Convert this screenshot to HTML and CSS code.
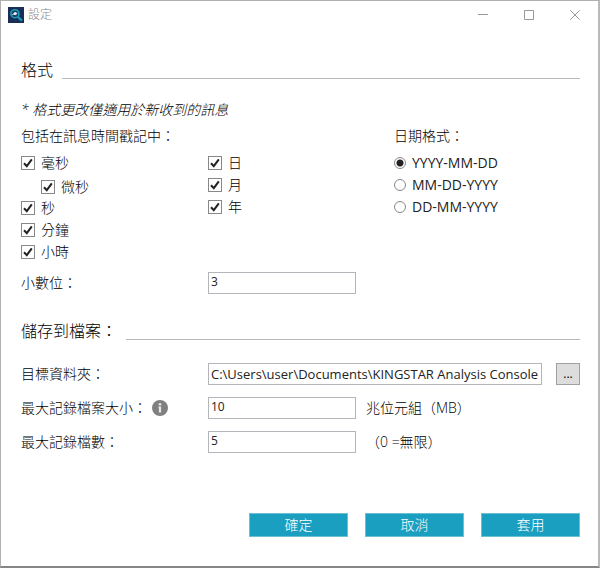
FILE: index.html
```html
<!DOCTYPE html>
<html lang="zh-Hant">
<head>
<meta charset="utf-8">
<meta name="viewport" content="width=device-width, initial-scale=1">
<title>設定</title>
<link rel="stylesheet" href="styles.css">
</head>
<body>
<div class="window">
  <header class="titlebar">
    <svg class="app-icon" viewBox="0 0 16 16" aria-hidden="true">
      <rect width="16" height="16" fill="#182f58"/>
      <circle cx="6.9" cy="6.7" r="4" fill="#173a5e" stroke="#1c9dbd" stroke-width="1.6"/>
      <path d="M9.8 9.8L13.8 13.6" stroke="#1c9dbd" stroke-width="2.2"/>
      <path d="M4.2 8L6 6.8L7 7.6L9.2 6" fill="none" stroke="#a9cbd8" stroke-width="1.1"/>
      <circle cx="7.2" cy="6.6" r="1.5" fill="#e4eef2"/>
    </svg>
    <h1 class="title">設定</h1>
    <div class="window-controls">
      <button type="button" class="window-button" aria-label="最小化"><svg viewBox="0 0 10 10"><path d="M0 4.5H10"/></svg></button>
      <button type="button" class="window-button" aria-label="最大化"><svg viewBox="0 0 10 10"><path d="M.5 .5H9.5V9.5H.5Z"/></svg></button>
      <button type="button" class="window-button" aria-label="關閉"><svg viewBox="0 0 10 10"><path d="M.3 .3L9.7 9.7M9.7 .3L.3 9.7"/></svg></button>
    </div>
  </header>

  <form class="content">
    <h2 class="section-title">格式</h2>
    <p class="note">* 格式更改僅適用於新收到的訊息</p>

    <div class="format-grid">
      <p class="group-label group-wide" id="stamp-label">包括在訊息時間戳記中：</p>
      <p class="group-label" id="date-label">日期格式：</p>
      <div class="options" role="group" aria-labelledby="stamp-label">
        <label class="option"><input type="checkbox" checked>毫秒</label>
        <label class="option option-nested"><input type="checkbox" checked>微秒</label>
        <label class="option"><input type="checkbox" checked>秒</label>
        <label class="option"><input type="checkbox" checked>分鐘</label>
        <label class="option"><input type="checkbox" checked>小時</label>
      </div>
      <div class="options" role="group" aria-labelledby="stamp-label">
        <label class="option"><input type="checkbox" checked>日</label>
        <label class="option"><input type="checkbox" checked>月</label>
        <label class="option"><input type="checkbox" checked>年</label>
      </div>
      <div class="options options-date" role="radiogroup" aria-labelledby="date-label">
        <label class="option"><input type="radio" name="date" checked>YYYY-MM-DD</label>
        <label class="option"><input type="radio" name="date">MM-DD-YYYY</label>
        <label class="option"><input type="radio" name="date">DD-MM-YYYY</label>
      </div>
    </div>

    <div class="field">
      <label class="field-label" for="decimals">小數位：</label>
      <input class="text-box" id="decimals" type="text" value="3">
    </div>

    <h2 class="section-title section-file">儲存到檔案：</h2>

    <div class="fields">
      <div class="field">
        <label class="field-label" for="folder">目標資料夾：</label>
        <input class="text-box text-box-path" id="folder" type="text" value="C:\Users\user\Documents\KINGSTAR Analysis Console">
        <button type="button" class="browse">...</button>
      </div>
      <div class="field">
        <label class="field-label" for="size">最大記錄檔案大小：
          <svg class="info" viewBox="0 0 16 16" aria-hidden="true">
            <circle cx="8" cy="8" r="8" fill="#808080"/>
            <circle cx="8" cy="4.2" r="1.3" fill="#e8e8e8"/>
            <path d="M6.3 6.5H9.1V12.4H6.9V7.5H6.3Z" fill="#e8e8e8"/>
          </svg>
        </label>
        <input class="text-box" id="size" type="text" value="10">
        <span class="unit">兆位元組（MB）</span>
      </div>
      <div class="field">
        <label class="field-label" for="count">最大記錄檔數：</label>
        <input class="text-box" id="count" type="text" value="5">
        <span class="unit">（0 =無限）</span>
      </div>
    </div>

    <div class="actions">
      <button type="submit" class="action">確定</button>
      <button type="button" class="action">取消</button>
      <button type="button" class="action">套用</button>
    </div>
  </form>
</div>
</body>
</html>
```
FILE: styles.css
```css
* {
  box-sizing: border-box;
}

body {
  margin: 0;
  background: #fff;
  color: #000;
  font: 14px/20px "Open Sans", "Noto Sans CJK TC", sans-serif;
  font-weight: 300;
}

h1, h2, p {
  margin: 0;
  font-weight: inherit;
}

button, input {
  margin: 0;
  font: inherit;
  color: inherit;
}

.window {
  display: flex;
  flex-direction: column;
  min-height: 100vh;
  border: 1px solid #b0aeae;
  border-right: 2px solid #bababa;
  border-bottom: 2px solid #868686;
}

.titlebar {
  display: flex;
  align-items: center;
  height: 28px;
  padding-left: 7px;
}

.app-icon {
  width: 16px;
  height: 16px;
  margin-right: 4px;
}

.title {
  color: #888;
  font-size: 12px;
  line-height: 18px;
}

.window-controls {
  display: flex;
  margin-left: auto;
}

.window-button {
  display: grid;
  place-items: center;
  width: 46px;
  height: 28px;
  padding: 0;
  border: 0;
  background: none;
}

.window-button svg {
  width: 10px;
  height: 10px;
  fill: none;
  stroke: #999;
}

.content {
  display: flex;
  flex: 1;
  flex-direction: column;
  padding: 29px 18px 29px 20px;
}

.section-title {
  display: flex;
  align-items: center;
  gap: 9px;
  font-size: 16px;
  line-height: 24px;
}

.section-title::after {
  content: "";
  flex: 1;
  align-self: flex-end;
  height: 1px;
  margin-bottom: 3px;
  background: #b8b8b8;
}

.section-file {
  margin-top: 25px;
}

.note {
  margin-top: 18px;
  font-style: italic;
}

.format-grid {
  display: grid;
  grid-template-columns: 187px 186px 1fr;
  row-gap: 6px;
  margin-top: 6px;
}

.group-wide {
  grid-column: span 2;
}

.options {
  display: flex;
  flex-direction: column;
  align-items: flex-start;
}

.options-date {
  color: #222;
  font-weight: 400;
}

.option {
  display: flex;
  align-items: center;
  gap: 6px;
  height: 22px;
}

.option-nested {
  height: 23px;
  padding: 3px 0 0 20px;
}

.option input {
  appearance: none;
  width: 14px;
  height: 14px;
  border: 1px solid #888;
  background: #fff;
}

.option input[type="checkbox"]:checked {
  background: #fff url("data:image/svg+xml,%3Csvg xmlns='http://www.w3.org/2000/svg' viewBox='0 0 12 12'%3E%3Cpath d='M2 6.2L4.8 9.2L9.8 2.4' fill='none' stroke='%23222' stroke-width='2'/%3E%3C/svg%3E") center / 12px 12px no-repeat;
}

.option input[type="radio"] {
  width: 12px;
  height: 12px;
  border-radius: 50%;
}

.option input[type="radio"]:checked {
  background: radial-gradient(circle, #222 0 3px, #fff 4px);
}

.field {
  display: flex;
  align-items: center;
}

.format-grid + .field {
  margin-top: 9px;
}

.fields {
  display: grid;
  gap: 12px;
  margin-top: 20px;
}

.field-label {
  display: flex;
  align-items: center;
  width: 187px;
}

.info {
  width: 16px;
  height: 16px;
  margin-left: 5px;
}

.text-box {
  width: 148px;
  height: 22px;
  padding: 0 2px 3px;
  border: 1px solid #b4b4bb;
  border-radius: 0;
  background: #fff;
  color: #222;
  font: 12px/16px "Open Sans", sans-serif;
}

.text-box-path {
  flex: 1;
  min-width: 0;
  padding: 0 0 0 2px;
  font-size: 13px;
}

.browse {
  width: 24px;
  height: 22px;
  margin-left: 14px;
  padding: 0;
  border: 1px solid #a0a0a0;
  background: #ddd;
  font: 12px/16px "Open Sans", sans-serif;
}

.unit {
  margin-left: 10px;
}

.actions {
  display: flex;
  justify-content: flex-end;
  gap: 17px;
  margin-top: auto;
}

.action {
  width: 99px;
  height: 24px;
  padding: 0;
  border: 1px solid #6cc0d4;
  background: #1a9fc0;
  color: #fff;
  line-height: 20px;
}
```
